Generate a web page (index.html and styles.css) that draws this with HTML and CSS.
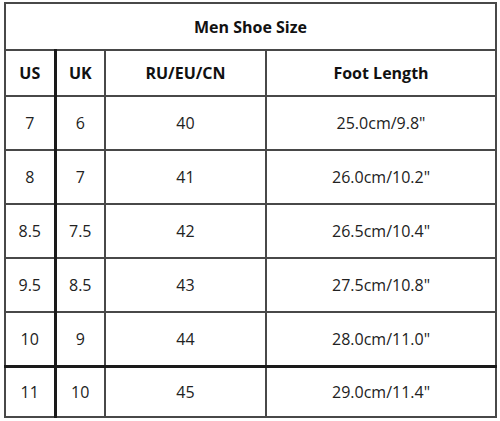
FILE: index.html
```html
<!DOCTYPE html>
<html>
<head>
<meta charset="utf-8">
<link rel="stylesheet" href="styles.css">
</head>
<body>
<table class="size-table">
  <colgroup>
    <col class="c-us"><col class="c-uk"><col class="c-eu"><col class="c-len">
  </colgroup>
  <tr class="title-row"><th colspan="4">Men Shoe Size</th></tr>
  <tr class="head-row"><th class="bl">US</th><th>UK</th><th>RU/EU/CN</th><th>Foot Length</th></tr>
  <tr><td class="bl">7</td><td>6</td><td>40</td><td>25.0cm/9.8"</td></tr>
  <tr><td class="bl">8</td><td>7</td><td>41</td><td>26.0cm/10.2"</td></tr>
  <tr><td class="bl">8.5</td><td>7.5</td><td>42</td><td>26.5cm/10.4"</td></tr>
  <tr><td class="bl">9.5</td><td>8.5</td><td>43</td><td>27.5cm/10.8"</td></tr>
  <tr><td class="bl">10</td><td>9</td><td>44</td><td>28.0cm/11.0"</td></tr>
  <tr class="last-row"><td class="bl">11</td><td>10</td><td>45</td><td>29.0cm/11.4"</td></tr>
</table>
</body>
</html>
```

FILE: styles.css
```css
html, body {
  margin: 0;
  padding: 0;
  background: #ffffff;
}
body {
  padding: 2px 0 0 4px;
  font-family: "Open Sans", "Noto Sans", sans-serif;
  color: #222;
}
.size-table {
  border-collapse: collapse;
  width: 491px;
  table-layout: fixed;
}
.c-us { width: 50px; }
.c-uk { width: 50px; }
.c-eu { width: 161px; }
.c-len { width: 230px; }
.size-table th,
.size-table td {
  border: 2px solid #484848;
  text-align: center;
  padding: 0;
  font-size: 16px;
}
.size-table th {
  font-weight: 700;
  color: #111;
}
.title-row th { height: 45px; }
.head-row th { height: 44px; }
.size-table td { height: 52px; font-weight: 400; }
.size-table .bl { border-right: 3px solid #1a1a1a; }
.last-row td { border-top: 3px solid #1a1a1a; height: 48px; }
```
